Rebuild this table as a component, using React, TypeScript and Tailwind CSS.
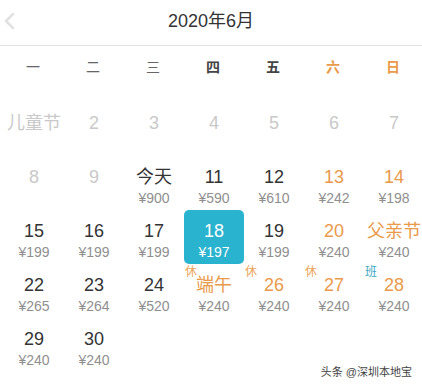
import React from "react";

type Cell = {
  label?: string;
  price?: string;
  tone?: "past" | "dark" | "orange" | "selected";
  tag?: { text: string; color: "rest" | "work" };
};

const rows: Cell[][] = [
  [
    { label: "儿童节", tone: "past" },
    { label: "2", tone: "past" },
    { label: "3", tone: "past" },
    { label: "4", tone: "past" },
    { label: "5", tone: "past" },
    { label: "6", tone: "past" },
    { label: "7", tone: "past" },
  ],
  [
    { label: "8", tone: "past" },
    { label: "9", tone: "past" },
    { label: "今天", price: "¥900", tone: "dark" },
    { label: "11", price: "¥590", tone: "dark" },
    { label: "12", price: "¥610", tone: "dark" },
    { label: "13", price: "¥242", tone: "orange" },
    { label: "14", price: "¥198", tone: "orange" },
  ],
  [
    { label: "15", price: "¥199", tone: "dark" },
    { label: "16", price: "¥199", tone: "dark" },
    { label: "17", price: "¥199", tone: "dark" },
    { label: "18", price: "¥197", tone: "selected" },
    { label: "19", price: "¥199", tone: "dark" },
    { label: "20", price: "¥240", tone: "orange" },
    { label: "父亲节", price: "¥240", tone: "orange" },
  ],
  [
    { label: "22", price: "¥265", tone: "dark" },
    { label: "23", price: "¥264", tone: "dark" },
    { label: "24", price: "¥520", tone: "dark" },
    { label: "端午", price: "¥240", tone: "orange", tag: { text: "休", color: "rest" } },
    { label: "26", price: "¥240", tone: "orange", tag: { text: "休", color: "rest" } },
    { label: "27", price: "¥240", tone: "orange", tag: { text: "休", color: "rest" } },
    { label: "28", price: "¥240", tone: "orange", tag: { text: "班", color: "work" } },
  ],
  [
    { label: "29", price: "¥240", tone: "dark" },
    { label: "30", price: "¥240", tone: "dark" },
    {},
    {},
    {},
    {},
    {},
  ],
];

const weekdays = [
  { t: "一", c: "text-[#666] font-normal" },
  { t: "二", c: "text-[#666] font-normal" },
  { t: "三", c: "text-[#666] font-normal" },
  { t: "四", c: "text-[#444] font-bold" },
  { t: "五", c: "text-[#444] font-bold" },
  { t: "六", c: "text-[#e99a4a] font-bold" },
  { t: "日", c: "text-[#e99a4a] font-bold" },
];

function DayCell({ cell }: { cell: Cell }) {
  if (!cell.label) return <div className="h-[54px]" />;
  const selected = cell.tone === "selected";
  const labelColor =
    cell.tone === "past"
      ? "text-[#c9c9c9]"
      : cell.tone === "orange"
      ? "text-[#e99a4a]"
      : selected
      ? "text-white"
      : "text-[#333]";
  const priceColor = selected ? "text-white" : "text-[#8f8f8f]";
  return (
    <div
      className={`relative h-[54px] flex flex-col items-center pt-[11px] ${
        selected ? "bg-[#29b3cf] rounded-[5px]" : ""
      }`}
    >
      {cell.tag && (
        <span
          className={`absolute left-[1px] top-[1px] text-[12px] leading-[14px] ${
            cell.tag.color === "rest" ? "text-[#eba458]" : "text-[#3aa7c4]"
          }`}
        >
          {cell.tag.text}
        </span>
      )}
      <div className={`text-[18px] leading-[20px] h-[20px] whitespace-nowrap ${labelColor}`}>
        {cell.label}
      </div>
      {cell.price && (
        <div className={`mt-[3px] text-[14px] leading-[16px] ${priceColor}`}>{cell.price}</div>
      )}
    </div>
  );
}

export default function App() {
  return (
    <div
      className="relative w-[422px] h-[384px] bg-white overflow-hidden"
      style={{ fontFamily: '"Liberation Sans", "Noto Sans CJK SC", sans-serif' }}
    >
      <div className="relative h-[46px] flex items-center justify-center border-b border-[#e3e3e3]">
        <svg
          className="absolute left-[3px] top-[12px]"
          width="12"
          height="18"
          viewBox="0 0 12 18"
          fill="none"
        >
          <path d="M10 2 L3 9 L10 16" stroke="#e2e2e2" strokeWidth="2.5" strokeLinecap="round" strokeLinejoin="round" />
        </svg>
        <span className="text-[18px] text-[#333] leading-[22px] mt-[-4px]">2020年6月</span>
      </div>
      <div className="grid grid-cols-[repeat(7,60px)] pl-[3px] h-[42px] items-center">
        {weekdays.map((w) => (
          <div key={w.t} className={`text-center text-[14px] ${w.c}`}>
            {w.t}
          </div>
        ))}
      </div>
      <div className="flex flex-col mt-[14px] pl-[4px]">
        {rows.map((r, i) => (
          <div key={i} className="grid grid-cols-[repeat(7,60px)]">
            {r.map((c, j) => (
              <DayCell key={j} cell={c} />
            ))}
          </div>
        ))}
      </div>
      <div className="absolute right-[10px] bottom-[5px] text-[11px] leading-[14px] text-[#444]">
        头条 @深圳本地宝
      </div>
    </div>
  );
}
